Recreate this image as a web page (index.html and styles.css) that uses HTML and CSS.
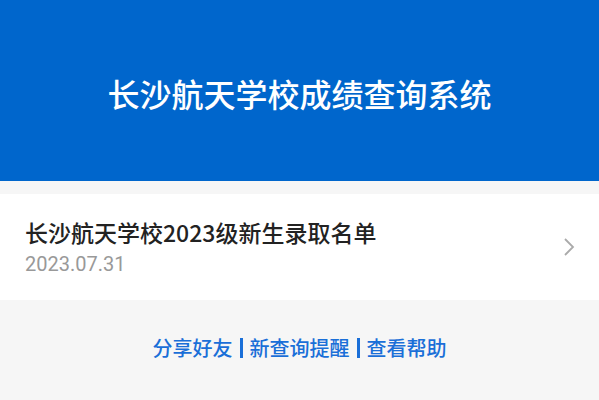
FILE: index.html
```html
<!DOCTYPE html>
<html lang="zh">
<head>
<meta charset="utf-8">
<link rel="stylesheet" href="styles.css">
</head>
<body>
<header class="banner">
  <h1 class="banner-title">长沙航天学校成绩查询系统</h1>
</header>
<main class="content">
  <a class="item" href="#">
    <div class="item-text">
      <div class="item-title">长沙航天学校2023级新生录取名单</div>
      <div class="item-date">2023.07.31</div>
    </div>
    <svg class="chevron" width="12" height="20" viewBox="0 0 12 20">
      <path d="M2 2 L10 10 L2 18" fill="none" stroke="#aaaaaa" stroke-width="1.8"/>
    </svg>
  </a>
  <nav class="links">
    <a href="#">分享好友</a><span class="sep"></span><a href="#">新查询提醒</a><span class="sep"></span><a href="#">查看帮助</a>
  </nav>
</main>
</body>
</html>
```
FILE: styles.css
```css
html, body {
  margin: 0;
  padding: 0;
  height: 100%;
}
body {
  background: #f6f6f6;
  font-family: "Noto Sans CJK SC", "Noto Sans", sans-serif;
}
.banner {
  background: #0066cc;
  height: 181px;
  display: flex;
  align-items: center;
  justify-content: center;
}
.banner-title {
  margin: 0;
  color: #ffffff;
  font-size: 32px;
  font-weight: 500;
  padding-top: 4px;
}
.content {
  padding-top: 13px;
}
.item {
  display: flex;
  align-items: center;
  justify-content: space-between;
  background: #ffffff;
  height: 106px;
  padding: 0 24px 0 25px;
  text-decoration: none;
  box-sizing: border-box;
}
.item-text {
  display: flex;
  flex-direction: column;
}
.item-title {
  color: #222222;
  font-size: 23px;
  font-weight: 500;
  line-height: 32px;
}
.item-date {
  color: #999999;
  font-family: Roboto, "Noto Sans", sans-serif;
  font-size: 20px;
  line-height: 28px;
  margin-top: 2px;
}
.chevron {
  display: block;
}
.links {
  display: flex;
  justify-content: center;
  align-items: center;
  gap: 7px;
  padding-top: 33px;
  font-size: 20px;
  font-weight: 500;
}
.links a {
  color: #1a6fd8;
  text-decoration: none;
}
.sep {
  display: block;
  width: 3px;
  height: 20px;
  background: #1a6fd8;
}
```
